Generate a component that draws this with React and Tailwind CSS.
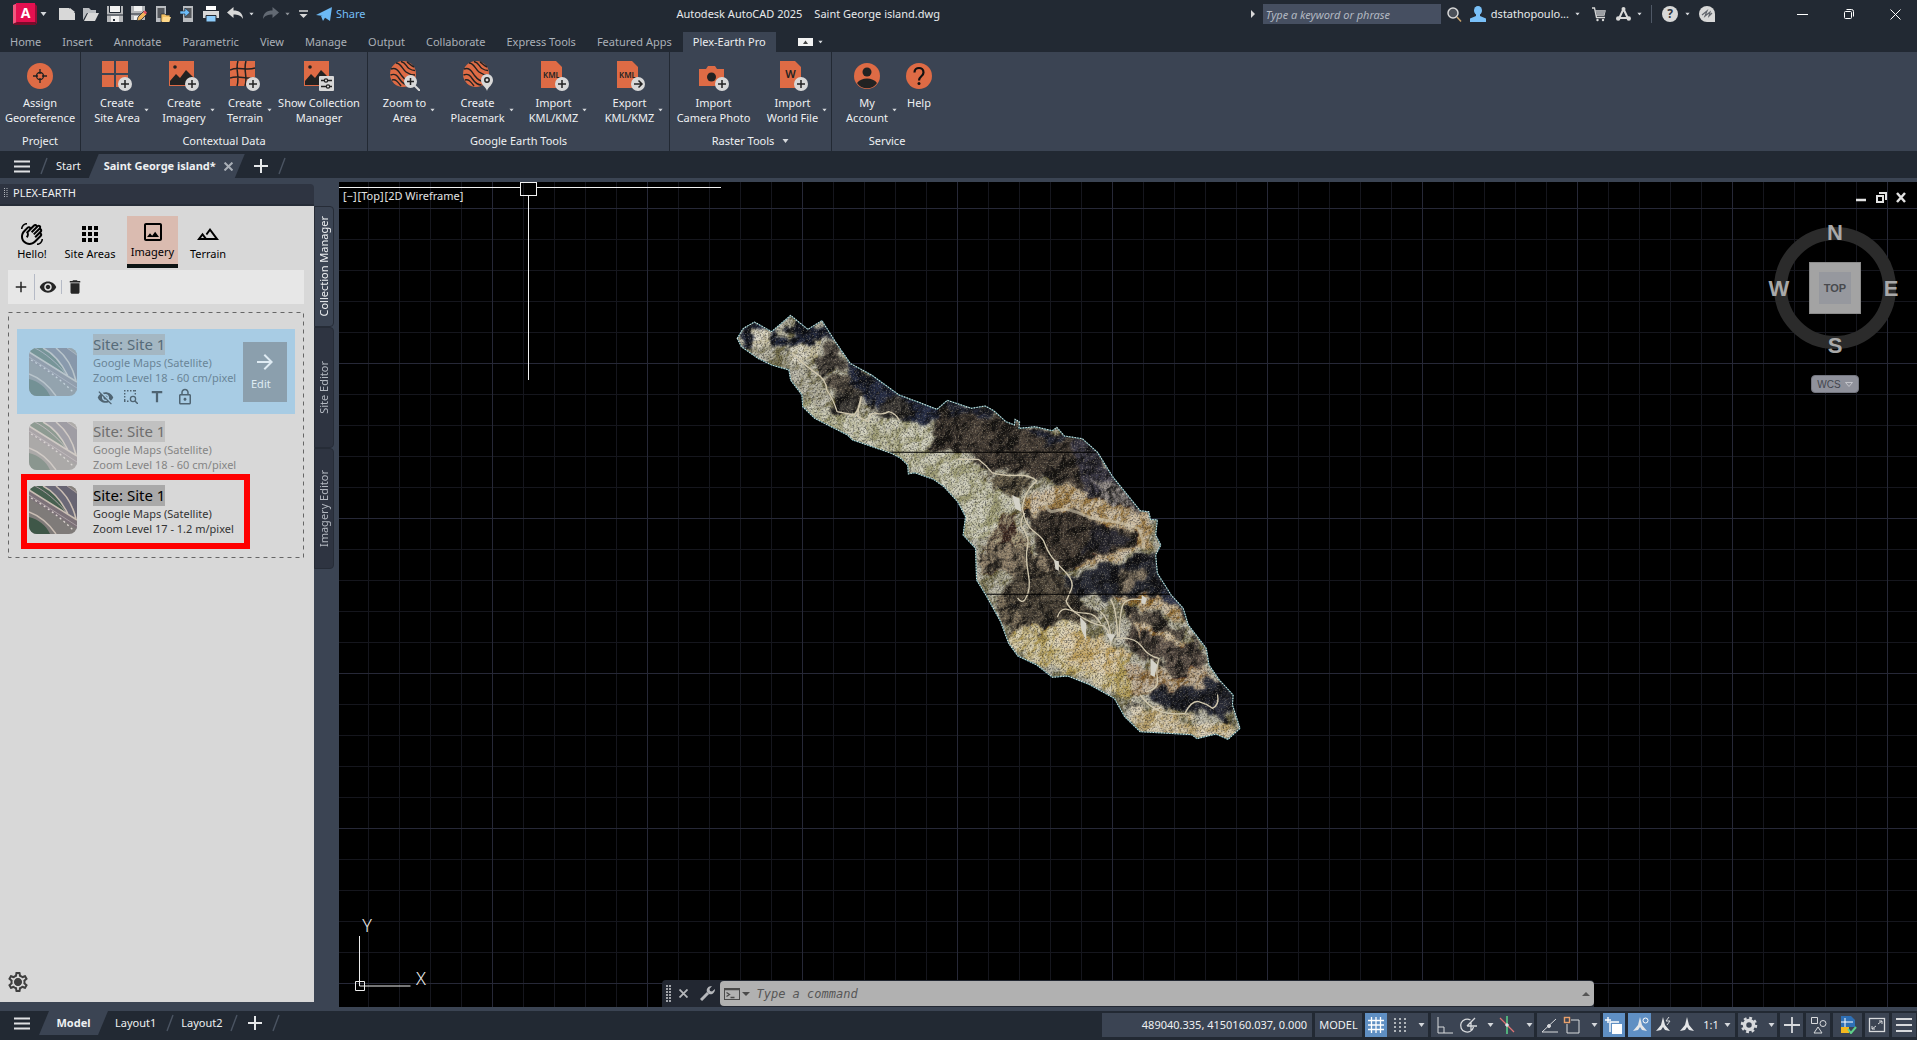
import { Fragment } from "react";
import {
  MdAdd,
  MdApps,
  MdArrowForward,
  MdDelete,
  MdOutlineImage,
  MdOutlineLandscape,
  MdOutlineLock,
  MdOutlineSettings,
  MdOutlineWavingHand,
  MdTitle,
  MdVisibility,
  MdVisibilityOff,
} from "react-icons/md";

const ORANGE = "#de6b45";
const LIGHT = "#d8d8d8";
const INK = "#222222";

const Caret = ({ className = "" }) => (
  <svg className={`shrink-0 ${className}`} width="7" height="4" viewBox="0 0 7 4" aria-hidden="true">
    <path d="M0.5 0h6L3.5 4z" fill="#d5d8dc" />
  </svg>
);

const Slash = () => (
  <svg className="shrink-0" width="8" height="18" viewBox="0 0 8 18" aria-hidden="true">
    <path d="M7 1L1 17" stroke="#4b5462" strokeWidth="1.4" />
  </svg>
);

const Burger = () => (
  <svg width="16" height="13" viewBox="0 0 16 13" aria-hidden="true">
    <path d="M0 1.5h16M0 6.5h16M0 11.5h16" stroke="#dfe1e4" strokeWidth="2" />
  </svg>
);

const PlusIcon = () => (
  <svg width="14" height="14" viewBox="0 0 14 14" aria-hidden="true">
    <path d="M7 0v14M0 7h14" stroke="#e6e8ea" strokeWidth="2" />
  </svg>
);

/* ---------- title bar ---------- */

const fileIcons = [
  {
    name: "New",
    art: <path d="M0 2h10l6 5v7H0zM11 2l5 4h-5z" fill={LIGHT} />,
  },
  {
    name: "Open",
    art: (
      <>
        <path d="M0 2h6l2 2h5v3H4L0 14z" fill="#b9bcc0" />
        <path d="M5 7h11l-4 8H1z" fill={LIGHT} />
      </>
    ),
  },
  {
    name: "Save",
    art: (
      <>
        <path d="M0 0h16v16H0z" fill="#b5b7ba" />
        <path d="M3 0h10v6H3zM4 10h8v6H4z" fill="#f1f1f1" />
        <path d="M2.5 0v6.5h11V0M0 9h16" stroke="#222933" fill="none" />
        <path d="M6 13h2v2H6z" fill="#222933" />
      </>
    ),
  },
  {
    name: "Save As",
    art: (
      <>
        <path d="M0 0h14v14H0z" fill="#b5b7ba" />
        <path d="M3 0h8v5H3zM3 10h6v4H3z" fill="#f1f1f1" />
        <path d="M0 8h14" stroke="#222933" />
        <path d="M6 15l1-4 6-6 3 3-6 6z" fill="#f0b45c" stroke="#222933" strokeWidth="0.8" />
        <path d="M12 6l2-1.5 2 2-1.5 2z" fill="#e25563" />
      </>
    ),
  },
  {
    name: "Open from Web & Mobile",
    art: (
      <>
        <path d="M1 0h10v16H1z" fill="#b9bcc0" />
        <path d="M2.5 2h7v10h-7z" fill="#55585d" />
        <path d="M6 8h4l1 1h4v7H6z" fill="#f2c063" stroke="#222933" strokeWidth="0.7" />
        <path d="M8 11h8l-2 5H7z" fill="#ffd98a" />
      </>
    ),
  },
  {
    name: "Save to Web & Mobile",
    art: (
      <>
        <path d="M4 0h10v16H4z" fill="#b9bcc0" />
        <path d="M5.5 2h7v10h-7z" fill="#55585d" />
        <path d="M1 5h5V2l5 4.5L6 11V8H1z" fill="#6cbcf8" stroke="#222933" strokeWidth="0.6" />
      </>
    ),
  },
  {
    name: "Plot",
    art: (
      <>
        <path d="M3 0h10v5H3z" fill="#fff" />
        <path d="M0 5h16v7H0z" fill={LIGHT} />
        <path d="M3 9.5h10V16H3z" fill="#8ccbfa" stroke="#222933" />
        <path d="M2 4.5h12" stroke="#222933" />
      </>
    ),
  },
];

const Undo = ({ flip, color }) => (
  <svg width="16" height="14" viewBox="0 0 16 14" className={flip ? "-scale-x-100" : ""} aria-hidden="true">
    <path d="M0 5.5L6.5 0v3.5C12 3.5 16 6 16 12c-2-3.5-5-4.5-9.5-4.5V11z" fill={color} />
  </svg>
);

const TitleBar = () => (
  <header className="flex h-8 items-start text-[#e8eaec]">
    <div className="flex h-7 items-center pl-3">
      <button aria-label="Application menu" className="flex items-center gap-[3px]">
        <svg width="25" height="22" viewBox="0 0 25 22" aria-hidden="true">
          <path d="M1 2l5-2v19l-5 2z" fill="#f0587f" />
          <path d="M1 21l4-2h18l1 3H3z" fill="#7b0b2b" />
          <path d="M4 0h19v19H4z" fill="#e51050" />
          <path d="M23 1l2 2v18l-2-2z" fill="#980e36" />
          <text x="13.5" y="14.5" textAnchor="middle" fontSize="14" fontWeight="700" fill="#fff" fontFamily="Noto Sans">
            A
          </text>
        </svg>
        <Caret />
      </button>
      <div className="flex items-center gap-2 pl-3">
        {fileIcons.map((icon) => (
          <button key={icon.name} aria-label={icon.name}>
            <svg width="16" height="16" viewBox="0 0 16 16" aria-hidden="true">
              {icon.art}
            </svg>
          </button>
        ))}
        <button aria-label="Undo" className="flex items-center gap-[5px]">
          <Undo color={LIGHT} />
          <Caret className="scale-75" />
        </button>
        <button aria-label="Redo" className="flex items-center gap-[5px]">
          <Undo flip color="#626973" />
          <Caret className="scale-75 opacity-60" />
        </button>
        <button aria-label="Customize">
          <svg width="9" height="8" viewBox="0 0 9 8" aria-hidden="true">
            <path d="M0 1h9" stroke={LIGHT} strokeWidth="1.5" />
            <path d="M0.5 4h8L4.5 8z" fill={LIGHT} />
          </svg>
        </button>
        <button className="flex items-center gap-1 text-[11px] text-[#74bff8]">
          <svg width="16" height="14" viewBox="0 0 16 14" aria-hidden="true">
            <path d="M0 8L16 0 7 9zM8 10l8-10-2 14zM5 9l10-8-8 13z" fill="#6cb9f5" />
          </svg>
          Share
        </button>
      </div>
    </div>
    <h1 className="flex h-7 flex-1 items-center justify-center gap-3 whitespace-pre text-[11px]">
      <span>Autodesk AutoCAD 2025</span>
      <span>Saint George island.dwg</span>
    </h1>
    <div className="flex h-7 items-center text-[11px]">
      <svg width="4" height="8" viewBox="0 0 4 8" aria-hidden="true">
        <path d="M0 0v8l4-4z" fill={LIGHT} />
      </svg>
      <input
        type="text"
        aria-label="Search"
        placeholder="Type a keyword or phrase"
        className="ml-2 h-5 w-[178px] bg-[#464f61] px-[3px] text-[11px] italic text-white outline-none placeholder:text-[#b3b9c2]"
      />
      <button aria-label="Find" className="ml-[6px]">
        <svg width="15" height="15" viewBox="0 0 15 15" fill="none" aria-hidden="true">
          <circle cx="6" cy="6" r="5" fill="#4b5058" stroke={LIGHT} strokeWidth="1.5" />
          <path d="M10 10l4 4.5" stroke="#c9a36c" strokeWidth="1.5" />
        </svg>
      </button>
      <button className="ml-2 flex items-center gap-[5px]">
        <svg width="16" height="16" viewBox="0 0 16 16" fill="#79c0f8" aria-hidden="true">
          <ellipse cx="8" cy="4.5" rx="4" ry="4.5" />
          <path d="M6 8h4v2l6 2.5V16H0v-3.5L6 10z" />
        </svg>
        dstathopoulo...
        <Caret className="scale-75" />
      </button>
      <button aria-label="App Store" className="ml-[11px]">
        <svg width="14" height="15" viewBox="0 0 14 15" fill="none" aria-hidden="true">
          <path d="M0 1h2.5l2 9.5H13M3.5 4H13l-1 4H4.5" stroke={LIGHT} strokeWidth="1.3" />
          <path d="M3.5 3.5h10L12 8H4.5z" fill="#9b9ea3" />
          <circle cx="5.5" cy="13" r="1.2" fill={LIGHT} />
          <circle cx="11" cy="13" r="1.2" fill={LIGHT} />
        </svg>
      </button>
      <button aria-label="Autodesk" className="ml-[10px] flex items-center gap-[5px]">
        <svg width="15" height="14" viewBox="0 0 15 14" aria-hidden="true">
          <path d="M7.5 2L3 11.5M7.5 2L12 11.5M3 11h9" stroke={LIGHT} strokeWidth="2" fill="none" />
          <circle cx="7.5" cy="2" r="2" fill={LIGHT} />
          <circle cx="2.2" cy="11.5" r="2.2" fill={LIGHT} />
          <circle cx="12.8" cy="11.5" r="2.2" fill={LIGHT} />
        </svg>
        <Caret className="scale-75" />
      </button>
      <span className="ml-2 h-[18px] w-px bg-[#4f5866]" />
      <button aria-label="Help" className="ml-[10px] flex items-center gap-[6px]">
        <span className="flex size-4 items-center justify-center rounded-full bg-[#d8d8d8] text-xs font-bold text-[#30353d]">?</span>
        <Caret className="scale-75" />
      </button>
      <button aria-label="Assistant" className="ml-2">
        <svg width="16" height="16" viewBox="0 0 16 16" aria-hidden="true">
          <path d="M8 0a8 8 0 0 1 8 8v8H8A8 8 0 0 1 8 0z" fill={LIGHT} />
          <path d="M3 9l5-4-2 5 5-4-1 4 3-3" stroke="#62666d" strokeWidth="1.2" fill="none" />
        </svg>
      </button>
      <div className="flex items-center gap-9 pl-[82px] pr-4">
        <button aria-label="Minimize">
          <svg width="11" height="11" viewBox="0 0 11 11" aria-hidden="true">
            <path d="M0 5.5h11" stroke="#fff" />
          </svg>
        </button>
        <button aria-label="Restore">
          <svg width="10" height="11" viewBox="0 0 10 11" fill="none" stroke="#fff" aria-hidden="true">
            <rect x="0.5" y="2.5" width="7" height="7" rx="1" />
            <path d="M2.5 0.5h5a2 2 0 0 1 2 2v5" />
          </svg>
        </button>
        <button aria-label="Close">
          <svg width="11" height="11" viewBox="0 0 11 11" stroke="#fff" aria-hidden="true">
            <path d="M0.5 0.5l10 10M10.5 0.5l-10 10" />
          </svg>
        </button>
      </div>
    </div>
  </header>
);

/* ---------- ribbon ---------- */

const menuTabs = [
  "Home",
  "Insert",
  "Annotate",
  "Parametric",
  "View",
  "Manage",
  "Output",
  "Collaborate",
  "Express Tools",
  "Featured Apps",
];

const MenuTabs = () => (
  <nav className="flex h-5 items-center gap-px text-[11px] text-[#aab0b8]">
    {menuTabs.map((tab) => (
      <a key={tab} href="#" className="px-[10px] leading-5">
        {tab}
      </a>
    ))}
    <a href="#" aria-current="page" className="bg-[#3b4453] px-[10px] leading-5 text-[#eceef0]">
      Plex-Earth Pro
    </a>
    <button aria-label="Ribbon display" className="ml-[21px] flex items-center gap-1">
      <svg width="15" height="8" viewBox="0 0 15 8" aria-hidden="true">
        <rect width="15" height="8" fill="#f2f2f2" />
        <path d="M5 6h5L7.5 2.5z" fill="#444" />
      </svg>
      <Caret className="scale-75" />
    </button>
  </nav>
);

const Badge = ({ arrow }) => (
  <>
    <circle cx="23" cy="23" r="7" fill={LIGHT} />
    {arrow ? (
      <path d="M19 23h7.5M23.5 19.5L27 23l-3.5 3.5" stroke={INK} strokeWidth="1.5" fill="none" />
    ) : (
      <path d="M23 19v8M19 23h8" stroke={INK} strokeWidth="1.5" />
    )}
  </>
);

const Globe = () => (
  <>
    <circle cx="13" cy="13" r="13" fill={ORANGE} />
    <path
      d="M6 2c5 0 6 6 10 9s6 3 9 3M11 0.5c5 1 5 5 8 7s4 2 6 2M1 8c6-2 8 3 11 7s7 6 11 5M0.5 14c5-2 7 1 9 4s5 6 9 6M2 19c4-1 6 2 9 6M17 1c2 1 3 3 7 5"
      stroke={INK}
      strokeWidth="1.4"
      fill="none"
    />
  </>
);

const Doc = ({ label }) => (
  <>
    <path d="M2 0h15l6 6v21H2z" fill={ORANGE} />
    <text x="12.5" y="17" textAnchor="middle" fontSize={label === "W" ? 11 : 8} fontWeight="600" fill={INK} fontFamily="Noto Sans">
      {label}
    </text>
  </>
);

const Photo = () => (
  <>
    <path d="M0 0h25v25H0z" fill={ORANGE} />
    <path d="M1 24v-4l6-7 4 4 6-8 8 8v7z" fill={INK} />
    <circle cx="6" cy="6" r="1.8" fill={INK} />
  </>
);

const ribbon = [
  {
    title: "Project",
    width: "w-[81px]",
    tools: [
      {
        lines: ["Assign", "Georeference"],
        width: "w-20",
        art: (
          <>
            <circle cx="15" cy="15" r="13" fill={ORANGE} />
            <circle cx="15" cy="15" r="3.5" fill="none" stroke={INK} strokeWidth="1.3" />
            <path d="M15 8v5M15 17v5M8 15h5M17 15h5" stroke={INK} strokeWidth="1.3" />
          </>
        ),
      },
    ],
  },
  {
    title: "Contextual Data",
    width: "w-[287px]",
    tools: [
      {
        lines: ["Create", "Site Area"],
        width: "w-[68px]",
        caret: true,
        art: (
          <>
            <path d="M0 0h12v12H0zM14 0h12v12H14zM0 14h12v12H0zM14 14h12v12H14z" fill={ORANGE} />
            <Badge />
          </>
        ),
      },
      {
        lines: ["Create", "Imagery"],
        width: "w-[66px]",
        caret: true,
        art: (
          <>
            <Photo />
            <Badge />
          </>
        ),
      },
      {
        lines: ["Create", "Terrain"],
        width: "w-[56px]",
        caret: true,
        art: (
          <>
            <path d="M0 0h25v25H0z" fill={ORANGE} />
            <path d="M8 0c-3 8 2 16-1 25M16 0c-3 9 2 16-1 25M0 9c8-4 16 1 25-2M0 17c8-3 14 1 25 0" stroke={INK} strokeWidth="1.5" fill="none" />
            <Badge />
          </>
        ),
      },
      {
        lines: ["Show Collection", "Manager"],
        width: "w-[92px]",
        art: (
          <>
            <Photo />
            <rect x="15" y="15" width="15" height="15" rx="1" fill={LIGHT} />
            <path d="M17 19.5h3M24 19.5h4M17 25.5h5M26 25.5h2" stroke={INK} strokeWidth="1.3" />
            <circle cx="22" cy="19.5" r="1.7" fill="none" stroke={INK} strokeWidth="1.2" />
            <circle cx="24" cy="25.5" r="1.7" fill="none" stroke={INK} strokeWidth="1.2" />
          </>
        ),
      },
    ],
  },
  {
    title: "Google Earth Tools",
    width: "w-[302px]",
    tools: [
      {
        lines: ["Zoom to", "Area"],
        width: "w-[70px]",
        caret: true,
        art: (
          <>
            <Globe />
            <path d="M24 24l6 6" stroke={LIGHT} strokeWidth="2" />
            <circle cx="20.5" cy="20.5" r="6.5" fill={LIGHT} />
            <path d="M20.5 17v7M17 20.5h7" stroke={INK} strokeWidth="1.5" />
          </>
        ),
      },
      {
        lines: ["Create", "Placemark"],
        width: "w-[76px]",
        caret: true,
        art: (
          <>
            <Globe />
            <path d="M24 30c-1-4-6-6-6-11a6 6 0 0 1 12 0c0 5-5 7-6 11z" fill={LIGHT} />
            <circle cx="24" cy="19" r="2.2" fill="none" stroke={INK} strokeWidth="1.5" />
          </>
        ),
      },
      {
        lines: ["Import", "KML/KMZ"],
        width: "w-[76px]",
        caret: true,
        art: (
          <>
            <Doc label="KML" />
            <Badge />
          </>
        ),
      },
      {
        lines: ["Export", "KML/KMZ"],
        width: "w-[76px]",
        caret: true,
        art: (
          <>
            <Doc label="KML" />
            <Badge arrow />
          </>
        ),
      },
    ],
  },
  {
    title: "Raster Tools",
    width: "w-[162px]",
    titleCaret: true,
    tools: [
      {
        lines: ["Import", "Camera Photo"],
        width: "w-[84px]",
        art: (
          <>
            <path d="M0 8h7l2-3h7l2 3h7v17H0z" fill={ORANGE} />
            <circle cx="12.5" cy="16" r="4.5" fill={INK} />
            <Badge />
          </>
        ),
      },
      {
        lines: ["Import", "World File"],
        width: "w-[74px]",
        caret: true,
        art: (
          <>
            <Doc label="W" />
            <Badge />
          </>
        ),
      },
    ],
  },
  {
    title: "Service",
    width: "w-[110px]",
    last: true,
    tools: [
      {
        lines: ["My", "Account"],
        width: "w-[64px]",
        caret: true,
        art: (
          <>
            <circle cx="15" cy="15" r="13" fill={ORANGE} />
            <circle cx="15" cy="11" r="4.5" fill={INK} />
            <path d="M5 22c4-6 16-6 20 0-4 7-16 7-20 0z" fill={INK} />
          </>
        ),
      },
      {
        lines: ["Help"],
        width: "w-[40px]",
        art: (
          <>
            <circle cx="15" cy="15" r="13" fill={ORANGE} />
            <path d="M10.5 11.5c0-6 9-6 9 0 0 4-4.5 3.5-4.5 8" stroke="#111" strokeWidth="2.2" fill="none" />
            <circle cx="15" cy="22.5" r="1.5" fill="#111" />
          </>
        ),
      },
    ],
  },
];

const Ribbon = () => (
  <section aria-label="Plex-Earth Pro" className="flex bg-[#3b4453] text-[11px] leading-[15px] text-[#eef0f2]">
    {ribbon.map((panel) => (
      <div key={panel.title} className={`${panel.width} shrink-0 ${panel.last ? "" : "border-r border-[#222933]"} pb-[2px] pt-[9px]`}>
        <div className="flex h-[72px] justify-center">
          {panel.tools.map((tool) => (
            <button key={tool.lines.join(" ")} className={`${tool.width} flex shrink-0 flex-col items-center gap-[4px]`}>
              <svg className="shrink-0" width="30" height="30" viewBox="0 0 30 30" aria-hidden="true">
                {tool.art}
              </svg>
              <span className="flex items-center whitespace-nowrap">
                <span>
                  {tool.lines.map((line, i) => (
                    <Fragment key={line}>
                      {i > 0 && <br />}
                      {line}
                    </Fragment>
                  ))}
                </span>
                {tool.caret && <Caret className="-mr-[10px] ml-[3px] scale-75" />}
              </span>
            </button>
          ))}
        </div>
        <div className="flex items-center justify-center gap-2 leading-4">
          {panel.title}
          {panel.titleCaret && <Caret />}
        </div>
      </div>
    ))}
  </section>
);

const DocTabs = () => (
  <div className="flex h-[27px] items-center pt-[3px] text-[11px] text-[#eef0f2]">
    <button aria-label="File tab menu" className="pl-[14px] pr-[10px]">
      <Burger />
    </button>
    <Slash />
    <a href="#" className="px-2">
      Start
    </a>
    <div className="flex h-6 items-center gap-2 bg-[#3b4453] pl-[15px] pr-3 font-bold [clip-path:polygon(10px_0,100%_0,calc(100%-10px)_100%,0_100%)]">
      Saint George island*
      <button aria-label="Close tab">
        <svg width="9" height="9" viewBox="0 0 8 8" stroke="#a9afb7" strokeWidth="1.8" aria-hidden="true">
          <path d="M0.5 0.5l7 7M7.5 0.5l-7 7" />
        </svg>
      </button>
    </div>
    <button aria-label="New drawing" className="pl-[9px] pr-[10px]">
      <PlusIcon />
    </button>
    <Slash />
  </div>
);

/* ---------- palette ---------- */

const Thumb = ({ className = "" }) => (
  <svg className={`shrink-0 rounded-lg ${className}`} width="48" height="48" viewBox="0 0 48 48" aria-hidden="true">
    <rect width="48" height="48" fill="#7f7b79" />
    <path d="M2 0h12c10 5 18 14 24 27L0 4V0z" fill="#46604f" />
    <path d="M14 0h15c9 9 15 20 18 32l-8-4C34 16 25 6 14 0z" fill="#6b6977" />
    <path d="M27 0h11l10 7v26C44 18 38 8 27 0z" fill="#676472" />
    <path d="M38 0h10v8z" fill="#85817c" />
    <path d="M0 5l48 30v8L0 12z" fill="#7c7178" />
    <path d="M0 31c9 2 17 8 21 17H0z" fill="#3f5748" />
    <path d="M0 4l48 30M14 0c10 5 18 14 25 28M27 0c10 8 17 20 20 33M0 26c11 4 20 12 27 22" stroke="#c9bdb3" strokeWidth="1.5" fill="none" />
    <path d="M0 9l48 31M6 0c10 5 22 15 31 26M38 0l10 7" stroke="#a79ca0" strokeWidth="1" fill="none" />
    <path d="M2 12c14 8 28 18 42 32" stroke="#ded6d2" strokeWidth="1.3" strokeDasharray="2 3" fill="none" />
  </svg>
);

const SelectZoom = () => (
  <svg width="14" height="14" viewBox="0 0 14 14" fill="none" stroke="currentColor" aria-hidden="true">
    <path d="M0.7 0v12M0 0.7h12M11.3 0v5M0 11.3h6" strokeWidth="1.4" strokeDasharray="1.5 1.5" />
    <circle cx="9" cy="9" r="2.6" strokeWidth="1.3" />
    <path d="M11 11l3 3" strokeWidth="1.5" />
  </svg>
);

const PaletteTabs = () => {
  const tabs = [
    { name: "Hello!", Icon: MdOutlineWavingHand, width: "w-[42px]" },
    { name: "Site Areas", Icon: MdApps, width: "w-[74px]" },
    { name: "Imagery", Icon: MdOutlineImage, width: "w-[51px]", active: true },
    { name: "Terrain", Icon: MdOutlineLandscape, width: "w-[60px]" },
  ];
  return (
    <div role="tablist" className="flex pl-[11px] pt-[10px] text-[11px] leading-4 text-black">
      {tabs.map(({ name, Icon, width, active }) => (
        <button
          key={name}
          role="tab"
          aria-selected={Boolean(active)}
          className={`${width} flex h-[52px] flex-col items-center whitespace-nowrap border-b-4 ${
            active ? "border-[#0d1414] bg-[#dabbb0] pt-1" : "border-transparent pt-[6px]"
          }`}
        >
          <Icon size={24} className="shrink-0" />
          <span>{name}</span>
        </button>
      ))}
    </div>
  );
};

const layers = [
  { zoom: "Zoom Level 18 - 60 cm/pixel", selected: true, faded: true },
  { zoom: "Zoom Level 18 - 60 cm/pixel", faded: true },
  { zoom: "Zoom Level 17 - 1.2 m/pixel", marked: true },
];

const LayerCard = ({ layer }) => (
  <li
    className={`relative flex items-center pl-3 pr-2 ${
      layer.selected ? "h-[85px] bg-[#a8cce4] text-[#6a8597]" : "h-16"
    } ${layer.faded && !layer.selected ? "text-[#858585]" : ""} ${layer.faded ? "" : "text-[#333]"}`}
  >
    <Thumb className={layer.faded ? "opacity-50" : ""} />
    <div className="flex-1 whitespace-nowrap pl-4 text-[11px] leading-[15px]">
      <div
        className={`w-fit text-[15px] leading-[21px] ${
          layer.selected ? "bg-[#a4b7c3] text-[#566b79]" : layer.faded ? "bg-[#c1c1c1] text-[#6e6e6e]" : "bg-[#a9a9a9] text-black"
        }`}
      >
        Site: Site 1
      </div>
      <div>Google Maps (Satellite)</div>
      <div>{layer.zoom}</div>
      {layer.selected && (
        <div className="flex h-[25px] items-center gap-[10px] pl-1 text-[#4f6472]">
          <button aria-label="Hide">
            <MdVisibilityOff size={17} />
          </button>
          <button aria-label="Zoom to selection">
            <SelectZoom />
          </button>
          <button aria-label="Rename">
            <MdTitle size={18} />
          </button>
          <button aria-label="Lock">
            <MdOutlineLock size={18} />
          </button>
        </div>
      )}
    </div>
    {layer.selected && (
      <button className="flex h-[60px] w-11 flex-col justify-center bg-[#8b9fad] pl-2 text-left text-[11px] leading-5 text-[#dfebf3]">
        <MdArrowForward size={24} className="ml-[2px]" />
        Edit
      </button>
    )}
    {layer.marked && <span className="absolute -top-1 left-1 h-[75px] w-[229px] border-[6px] border-[#ff0000]" />}
  </li>
);

const Palette = () => (
  <aside className="flex w-[314px] shrink-0 flex-col pb-[9px] pt-[6px]">
    <h2 className="flex h-[22px] items-center gap-[5px] rounded-tr border-b-2 border-[#262c37] bg-[#2e3441] pb-[2px] pl-1 text-[11px] text-[#eef0f2]">
      <svg width="4" height="10" viewBox="0 0 4 10" aria-hidden="true">
        <path d="M0.5 0v10M3 0v10" stroke="#b7bbc1" strokeDasharray="1 1" />
      </svg>
      PLEX-EARTH
    </h2>
    <div className="flex flex-1 flex-col bg-[#d8d8d8]">
      <PaletteTabs />
      <div className="mx-2 mr-[10px] mt-[2px] flex h-[34px] items-center bg-[#e7e7e7] pl-1 text-[#262626]">
        <button aria-label="Add">
          <MdAdd size={18} />
        </button>
        <span className="ml-1 h-[26px] w-px bg-[#b5bac6]" />
        <button aria-label="Toggle visibility" className="ml-1">
          <MdVisibility size={18} />
        </button>
        <span className="ml-1 h-[14px] w-px bg-[#b5bac6]" />
        <button aria-label="Delete" className="ml-1">
          <MdDelete size={18} />
        </button>
      </div>
      <div className="relative ml-2 mr-[10px] mt-2 px-[9px] pb-4 pt-[17px]">
        <svg className="absolute inset-0 size-full" fill="none" stroke="#666" aria-hidden="true">
          <rect x="0.5" y="0.5" width="295" height="245" strokeDasharray="4 4" />
        </svg>
        <ul className="relative">
          {layers.map((layer, index) => (
            <LayerCard key={index} layer={layer} />
          ))}
        </ul>
      </div>
      <button aria-label="Settings" className="mb-[8px] ml-[6px] mt-auto w-fit text-[#3f3f3f]">
        <svg width="24" height="24" viewBox="0 0 24 24" aria-hidden="true">
          <MdOutlineSettings size={24} />
          <circle cx="12" cy="12" r="3.5" fill="currentColor" />
        </svg>
      </button>
    </div>
  </aside>
);

const SideTabs = () => (
  <div role="tablist" aria-label="Palette pages" className="mr-[5px] flex w-5 shrink-0 flex-col pt-7 text-[11px]">
    {["Collection Manager", "Site Editor", "Imagery Editor"].map((name, index) => (
      <button
        key={name}
        role="tab"
        aria-selected={index === 0}
        className={`flex h-[121px] items-center justify-center rounded-r border border-[#262c37] ${
          index === 0 ? "bg-[#3b4453] text-[#eef0f2]" : "bg-[#2e3441] text-[#b3b8c0]"
        }`}
      >
        <span className="rotate-180 whitespace-nowrap [writing-mode:vertical-rl]">{name}</span>
      </button>
    ))}
  </div>
);

/* ---------- drawing area ---------- */

const coast =
  "M50 115L68 85 100 66 150 95 205 46 255 88 296 62 310 85 335 125 378 190 440 225 520 285 575 306 630 328 660 301 730 325 770 318 795 332 830 365 855 375 857 358 870 366 868 385 915 380 965 392 978 382 1000 408 1052 416 1097 458 1140 530 1220 632 1245 635 1250 658 1270 660 1265 705 1280 735 1265 765 1270 820 1310 885 1345 925 1360 975 1412 1045 1420 1095 1450 1140 1490 1185 1488 1215 1510 1285 1475 1318 1440 1302 1385 1316 1370 1304 1270 1298 1220 1295 1175 1250 1145 1195 1075 1155 1010 1128 965 1132 920 1095 865 1068 838 1030 815 965 772 885 745 840 742 745 706 705 713 650 690 605 650 560 620 538 565 518 547 522 545 495 525 475 498 460 400 425 385 420 370 405 275 355 240 320 238 285 205 240 200 210 150 195 110 175 62 140z";

const Island = () => (
  <svg
    className="absolute left-[381px] top-[118px] h-[450px] w-[540px]"
    viewBox="0 0 1568 1350"
    preserveAspectRatio="none"
    role="img"
    aria-label="Satellite imagery of the island"
  >
    <defs>
      <clipPath id="coast">
        <path d={coast} />
      </clipPath>
      <filter id="rough" x="0" y="0" width="100%" height="100%" colorInterpolationFilters="sRGB">
        <feTurbulence type="fractalNoise" baseFrequency="0.02" numOctaves="5" seed="4" result="n" />
        <feDisplacementMap in="SourceGraphic" in2="n" scale="70" xChannelSelector="R" yChannelSelector="G" result="d" />
        <feGaussianBlur in="d" stdDeviation="3" />
      </filter>
      <filter id="relief" x="0" y="0" width="100%" height="100%" colorInterpolationFilters="sRGB">
        <feTurbulence type="fractalNoise" baseFrequency="0.012 0.016" numOctaves="5" seed="12" />
        <feColorMatrix values="0 0 0 0 0  0 0 0 0 0  0 0 0 0 0  1 0 0 0 0" />
        <feDiffuseLighting surfaceScale="40" diffuseConstant="0.72" lightingColor="#fff">
          <feDistantLight azimuth="200" elevation="42" />
        </feDiffuseLighting>
      </filter>
      <filter id="grain" x="0" y="0" width="100%" height="100%" colorInterpolationFilters="sRGB">
        <feTurbulence type="fractalNoise" baseFrequency="0.2" numOctaves="3" seed="9" />
        <feColorMatrix values="0 0 0 0 0.1  0 0 0 0 0.1  0 0 0 0 0.12  3 0 0 0 -1.3" />
      </filter>
      <filter id="speck" x="0" y="0" width="100%" height="100%" colorInterpolationFilters="sRGB">
        <feTurbulence type="fractalNoise" baseFrequency="0.22" numOctaves="3" seed="21" />
        <feColorMatrix values="0 0 0 0 0.86  0 0 0 0 0.82  0 0 0 0 0.7  0 4 0 0 -2.1" />
      </filter>
    </defs>
    <g clipPath="url(#coast)" className="isolate">
      <g filter="url(#rough)">
        <path d="M0 0h1568v1350H0z" fill="#a9a692" />
        <path d="M240 300L400 340 610 370 600 450 760 500 860 600 780 720 700 720 640 560 380 430 240 350z" fill="#c3c2aa" />
        <path d="M60 70L160 60 190 140 60 130zM215 40l70 40 30-20 25 60-90 10-60 20z" fill="#1d2335" />
        <path d="M90 85l60 10 0 40-50 10zM210 140l100-30-40 60-50 10z" fill="#d0cbb5" />
        <path d="M260 180l70-50 50 70-70 20z" fill="#47413a" />
        <path d="M310 240l80-30 60 40-40 60-70 30z" fill="#4b443b" />
        <path d="M380 180l160 100 110 50-20 40-120 0-60-60-90-60z" fill="#20263a" />
        <path d="M340 290l70-10-30 60-50-10zM440 330l60-40 80 50-70 20z" fill="#3a3733" />
        <path d="M600 450L640 330 670 295 870 370 1060 410 1150 530 1110 600 1010 550 920 540 860 520 780 510 700 460z" fill="#3f372f" />
        <path d="M1020 420l50 0 160 210-20 40-110-50-60-90z" fill="#34323d" />
        <path d="M1080 540l60 0 90 110-80-20z" fill="#7d7775" />
        <path d="M620 320l40-30 140 40-40 30zM880 380l140 30-60 30z" fill="#222532" />
        <path d="M770 520l150 20-60 50-40-10z" fill="#5a513f" />
        <path d="M870 600L1000 550 1110 590 1240 660 1270 740 1120 780 1040 810 940 700z" fill="#c0ac8b" />
        <path d="M890 640l60-10 100 10 20 20 140 40 0 30-90 30-120 60-60-20-30-80z" fill="#3b332b" />
        <path d="M1080 670l130 40-80 40-80 20z" fill="#27262d" />
        <path d="M1040 830l60-40 60 0 100-30 10 60 50 80-180-10-130 0-40-30z" fill="#22242c" />
        <path d="M1170 800l60 10-40 70-40 0z" fill="#6d6252" />
        <path d="M780 690l80-60 30 100-20 60-110-10z" fill="#8b7d65" />
        <path d="M760 740l130 0 90 70-10 70-130-60-90 10z" fill="#786b58" />
        <path d="M850 830l130-10 70 90 60 40-40 10-70 0-50 50-110-10-40-100z" fill="#4a4236" />
        <path d="M800 880l60 30 40 90-60 10z" fill="#675c4a" />
        <path d="M840 1000l140-20 60-30 40 90 130 60-10 90-100-30-130-50-120-50z" fill="#cfc298" />
        <path d="M980 990l120 20 80 50-40 80-130-50z" fill="#d6c39a" />
        <path d="M1170 920l60 10 120 60-20 30-150-40z" fill="#4c443b" />
        <path d="M1180 980l60 0 150 50 20 60-50 40-150-60-40-50z" fill="#564b42" />
        <path d="M1130 890l200 0 30 80-150-50z" fill="#b8a27e" />
        <path d="M1190 955l160 60 10 20-60-15-110-40z" fill="#c0aa86" />
        <path d="M1260 870l60 0 40 90-60-40z" fill="#2a2e3f" />
        <path d="M1180 1090l180 30 60-30 60 90-200 0-80 0z" fill="#b29d80" />
        <path d="M1240 1175l160-20 30-30 60 60-10 80-60-20-150-10z" fill="#23252f" />
        <path d="M1170 1200l50 10 60 30 200 30 30 50-300-10z" fill="#d2c4a4" />
        <path d="M1160 1215l70-5-20 25zM830 915l60 20-50-5z" fill="#34322f" />
      </g>
      <path d="M0 0h1568v1350H0z" filter="url(#relief)" className="mix-blend-overlay" opacity="0.7" />
      <path d="M0 0h1568v1350H0z" filter="url(#grain)" opacity="0.5" />
      <path d="M0 0h1568v1350H0z" filter="url(#speck)" opacity="0.3" />
      <g fill="none" stroke="#d0c7ae" strokeWidth="4" strokeLinejoin="round" strokeLinecap="round">
        <path d="M210 160q40 40 70 60t30 50q20 30 30 65l50 10q20-30 20-55-10 30-10 60l30 15q5-30 25-25t35-5q20 5 30 25" />
        <path d="M690 478h60q20 15 40 40 30 10 70 8t60 17q-25 20-35 50t-5 40q5 40 30 60t30 30q10 30 25 50t35 40q30 30 20 55t-15 35q5 20 40 45t70 30q20 20 20 60" />
        <path d="M1155 1015q50-5 70 25t50 35q-10 30-5 60t-30 40M885 640q-15 20-10 40 25 30 18 60t2 80q10 50-10 80-10 10-20-5M980 950q10-30 35-20t50 10 40 30M1105 935q25 20 30 75M1135 900q15 20 20 110M1230 900q-50-10-60 15t-10 95M1220 1185q30 40 60 50t70 5q20-40 40-35t40 20q20-10 15-40" />
        <path d="M945 610q5 25 20 25 30-10 50-5t40 15 60 15 100 25q15 30 15 60" strokeWidth="9" opacity="0.6" />
      </g>
      <g fill="#d4d2c8">
        <path d="M848 585l20 10 8 40-18-8zM970 780l14 4 0 28-10-4zM1045 950l18 20 0 50-14-30zM1225 885l14 10-4 18-12-4zM1120 1000l28 4-12 22zM1250 1075l20 20-8 36-12-6z" />
      </g>
      <path d="M0 457h1568M0 883h1568" stroke="#000" strokeWidth="3" />
    </g>
    <path d={coast} fill="none" stroke="#3b7078" strokeWidth="3" />
    <path d={coast} fill="none" stroke="#dfe8e4" strokeWidth="3" strokeDasharray="4 4" />
  </svg>
);

const ViewCube = () => (
  <div className="absolute right-[12px] top-[30px] flex w-[140px] flex-col items-center gap-[13px] font-[Liberation_Sans]">
    <svg width="140" height="150" viewBox="0 -10 140 150" role="img" aria-label="View cube">
      <circle cx="70" cy="66" r="54.5" fill="none" stroke="#2b2b2b" strokeWidth="13" />
      <rect x="44.5" y="40.5" width="51" height="51" fill="#a3a3a3" stroke="#8b8b8b" />
      <rect x="54" y="50" width="32" height="32" fill="#96989e" />
      <g fill="#a9a9a9" fontSize="22" fontWeight="700" textAnchor="middle">
        <text x="70" y="18">N</text>
        <text x="126" y="74">E</text>
        <text x="70" y="131">S</text>
        <text x="14" y="74">W</text>
      </g>
      <text x="70" y="70" textAnchor="middle" fontSize="11" fontWeight="700" fill="#484a4e">
        TOP
      </text>
    </svg>
    <button className="flex h-[18px] w-12 items-center justify-center gap-1 rounded border border-[#73757f] bg-[#8f919b] text-[10px] text-[#42454d]">
      WCS
      <svg width="8" height="5" viewBox="0 0 8 5" aria-hidden="true">
        <path d="M0.5 0.5h7L4 4.5z" fill="none" stroke="#c3c4ca" />
      </svg>
    </button>
  </div>
);

const Canvas = () => (
  <main className="relative mb-1 mt-1 flex flex-1 flex-col overflow-hidden bg-black">
    <svg className="absolute inset-0 size-full" aria-hidden="true">
      <defs>
        <pattern id="minor" x="29" y="26" width="31" height="31" patternUnits="userSpaceOnUse">
          <path d="M0 0.5h31M0.5 0v31" stroke="#15161d" />
        </pattern>
        <pattern id="major" x="153" y="26" width="155" height="155" patternUnits="userSpaceOnUse">
          <path d="M0 0.5h155M0.5 0v155" stroke="#262837" />
        </pattern>
      </defs>
      <rect width="100%" height="100%" fill="url(#minor)" />
      <rect width="100%" height="100%" fill="url(#major)" />
    </svg>
    <Island />
    <svg className="absolute left-0 top-0" width="390" height="200" fill="none" stroke="#f2f2f2" aria-hidden="true">
      <path d="M0 5.5h181M198 5.5h184M189.5 14v184" />
      <rect x="181.5" y="0.5" width="16" height="13" />
    </svg>
    <div className="relative flex items-start justify-between pl-1 pr-[10px] pt-[6px] text-[11px] leading-4 text-[#e4e4e4]">
      <div className="flex gap-px">
        <button>[−]</button>
        <button>[Top]</button>
        <button>[2D Wireframe]</button>
      </div>
      <svg className="mt-1" width="52" height="11" viewBox="0 0 52 11" fill="none" stroke="#e2e2e2" strokeWidth="2" aria-hidden="true">
        <path d="M1 8h10M42 1l8 9M50 1l-8 9" strokeWidth="2.5" />
        <path d="M22 4h6v6h-6zM24 1h7v7" />
      </svg>
    </div>
    <ViewCube />
    <svg className="absolute bottom-2 left-4" width="76" height="88" fill="none" stroke="#ededed" aria-hidden="true">
      <path d="M4.5 25v50h51M0.5 70.5h9v9h-9z" />
      <g fill="#ededed" stroke="none" fontSize="18" fontWeight="300" textAnchor="middle" fontFamily="Noto Sans">
        <text x="12" y="21">Y</text>
        <text x="66" y="74">X</text>
      </g>
    </svg>
    <div className="relative mx-auto mt-auto flex h-[27px] w-[59%] items-stretch rounded-t bg-[#222731]">
      <div className="flex w-[58px] items-center gap-3 pl-1">
        <svg width="5" height="17" viewBox="0 0 5 17" aria-hidden="true">
          <path d="M1 0v17M4 0v17" stroke="#a3a6ab" strokeWidth="2" strokeDasharray="2 1" />
        </svg>
        <button aria-label="Close command line" className="-ml-1">
          <svg width="9" height="9" viewBox="0 0 9 9" stroke="#b5b7bb" strokeWidth="1.8" aria-hidden="true">
            <path d="M0.5 0.5l8 8M8.5 0.5l-8 8" />
          </svg>
        </button>
        <button aria-label="Customize command line">
          <svg width="15" height="15" viewBox="0 0 15 15" aria-hidden="true">
            <path d="M1 14L8 7" stroke="#b5b7bb" strokeWidth="3" />
            <path d="M12 0L9.5 3l.5 2 2 .5L15 3c0 4-3 6-6 5L7 6c-1-3 1-6 5-6z" fill="#b5b7bb" />
          </svg>
        </button>
      </div>
      <div className="mb-px mt-px flex flex-1 items-center gap-[2px] rounded-sm bg-[#b1b1b1] px-1">
        <svg width="16" height="12" viewBox="0 0 16 12" fill="none" stroke="#4a4a4a" aria-hidden="true">
          <rect x="0.5" y="0.5" width="15" height="11" />
          <path d="M0 1.5h16M2.5 4.5l3 2-3 2M6.5 9.5h4" strokeWidth="1.3" />
        </svg>
        <svg width="8" height="4" viewBox="0 0 8 4" aria-hidden="true">
          <path d="M0 0h8L4 4z" fill="#4a4a4a" />
        </svg>
        <input
          type="text"
          aria-label="Command line"
          placeholder="Type a command"
          className="h-full min-w-0 flex-1 bg-transparent pl-1 font-['DejaVu_Sans_Mono',monospace] text-xs italic outline-none placeholder:text-[#565656]"
        />
        <svg width="8" height="4" viewBox="0 0 8 4" aria-hidden="true">
          <path d="M0 4h8L4 0z" fill="#555" />
        </svg>
      </div>
    </div>
  </main>
);

/* ---------- status bar ---------- */

const Cell = ({ label, width, on, caret, children }) => (
  <button
    aria-label={label}
    className={`${width} flex h-6 shrink-0 items-center justify-center gap-[10px] ${on ? "bg-[#5f8fc3]" : ""}`}
  >
    <svg width="18" height="18" viewBox="0 0 18 18" fill="none" stroke="#d8dadd" aria-hidden="true">
      {children}
    </svg>
    {caret && <Caret />}
  </button>
);

const Group = ({ children }) => <div className="flex shrink-0 bg-[#3b4453]">{children}</div>;

const Person = () => <path d="M9 1l2 8 5 6-5-1-2-3-2 3-5 1 5-6z" fill="#e4e6e8" stroke="none" />;

const StatusBar = () => (
  <footer className="flex h-[29px] items-start text-[11px] text-[#eef0f2]">
    <button aria-label="Layout menu" className="flex h-6 items-center pl-[14px] pr-[9px]">
      <Burger />
    </button>
    <a
      href="#"
      className="flex h-6 w-[69px] items-center justify-center bg-[#3b4453] font-bold [clip-path:polygon(10px_0,100%_0,calc(100%-10px)_100%,0_100%)]"
    >
      Model
    </a>
    <div className="flex h-6 items-center">
      <a href="#" className="pl-[7px] pr-[10px]">
        Layout1
      </a>
      <Slash />
      <a href="#" className="px-[7px]">
        Layout2
      </a>
      <Slash />
      <button aria-label="New layout" className="px-[10px]">
        <PlusIcon />
      </button>
      <Slash />
    </div>
    <div className="ml-auto mt-[2px] flex h-6 shrink-0 gap-[3px] pr-px">
      <div className="flex w-[210px] items-center justify-end bg-[#3b4453] pr-[5px]">489040.335, 4150160.037, 0.000</div>
      <button className="w-[47px] bg-[#3b4453]">MODEL</button>
      <Group>
        <Cell label="Grid" width="w-[22px]" on>
          <path d="M4.5 1v16M9 1v16M13.5 1v16M1 4.5h16M1 9h16M1 13.5h16" stroke="#fff" strokeWidth="1.3" />
        </Cell>
        <Cell label="Snap" width="w-[41px]" caret>
          <path d="M4 3h12M4 7h12M4 11h12M4 15h12" strokeWidth="1.7" strokeDasharray="2 3" />
        </Cell>
      </Group>
      <Group>
        <Cell label="Ortho" width="w-[25px]">
          <path d="M3 1v16h15M3 11h6v6" />
        </Cell>
        <Cell label="Polar tracking" width="w-[40px]" caret>
          <path d="M11.5 4a6.5 6.5 0 1 0 3 7M8 10h10M8 10l8-8M12 6v8" strokeWidth="1.3" />
        </Cell>
        <Cell label="Isometric drafting" width="w-[38px]" caret>
          <path d="M2 2l14 14" stroke="#e07474" strokeWidth="1.3" />
          <path d="M9 0v18" stroke="#5bd58a" strokeWidth="1.5" />
          <circle cx="9" cy="9" r="1.3" fill="#eef0f2" />
        </Cell>
      </Group>
      <Group>
        <Cell label="Object snap tracking" width="w-[24px]">
          <path d="M16 3L2 16h16" />
          <circle cx="9" cy="10" r="1.5" fill="#d8dadd" />
        </Cell>
        <Cell label="Object snap" width="w-[39px]" caret>
          <path d="M8 4h8v13H4V8" />
          <rect x="1.5" y="1.5" width="5" height="5" stroke="#eaa06a" strokeWidth="1.4" />
        </Cell>
      </Group>
      <Group>
        <Cell label="Selection cycling" width="w-[22px]" on>
          <path d="M7 8h10v10H7z" fill="#fff" stroke="none" />
          <path d="M5 16V6h9M3 1v6M0 4h6" stroke="#fff" strokeWidth="1.4" />
        </Cell>
      </Group>
      <Group>
        <Cell label="Annotation visibility" width="w-[23px]" on>
          <Person />
          <circle cx="14.5" cy="4.5" r="2.5" stroke="#fff" />
        </Cell>
        <Cell label="Auto scale" width="w-[24px]">
          <Person />
          <path d="M15 1l-3 4h4l-3 4" />
        </Cell>
        <Cell label="Annotation" width="w-[24px]">
          <Person />
        </Cell>
        <button className="flex w-[36px] items-center justify-center gap-[5px]">
          1:1
          <Caret />
        </button>
      </Group>
      <Group>
        <Cell label="Workspace switching" width="w-[39px]" caret>
          <circle cx="9" cy="9" r="4.5" strokeWidth="3.5" />
          <circle cx="9" cy="9" r="7" strokeWidth="2.5" strokeDasharray="2.8 2.7" />
        </Cell>
      </Group>
      <Group>
        <Cell label="Annotation monitor" width="w-[23px]">
          <path d="M9 1v16M1 9h16" strokeWidth="1.8" />
        </Cell>
      </Group>
      <Group>
        <Cell label="Isolate objects" width="w-[24px]">
          <path d="M2.5 1.5h6v6h-6zM9 11l4 6H5z" />
          <circle cx="14" cy="7.5" r="3" />
        </Cell>
      </Group>
      <Group>
        <Cell label="Graphics performance" width="w-[29px]">
          <path d="M2 0h10l4 4v7H2z" fill="#2e6fb5" stroke="none" />
          <path d="M2 11h8v6H2z" fill="#f3b81f" stroke="none" />
          <path d="M6 2v9M2 6h12" stroke="#fff" />
          <path d="M9 13l3 4 5-6" stroke="#5fd08a" strokeWidth="2" />
        </Cell>
      </Group>
      <Group>
        <Cell label="Clean screen" width="w-[24px]">
          <rect x="1.5" y="2.5" width="15" height="13" strokeWidth="1.3" />
          <path d="M10 8l4-3M14 8V5h-3M8 10l-4 3M4 10v3h3" />
        </Cell>
      </Group>
      <Group>
        <Cell label="Customization" width="w-[24px]">
          <path d="M1 3h16M1 9h16M1 15h16" strokeWidth="1.8" />
        </Cell>
      </Group>
    </div>
  </footer>
);

const App = () => (
  <div className="flex h-screen flex-col overflow-hidden bg-[#222933] font-['Noto_Sans','Open_Sans',sans-serif]">
    <TitleBar />
    <MenuTabs />
    <Ribbon />
    <DocTabs />
    <div className="flex min-h-0 flex-1 bg-[#3b4453]">
      <Palette />
      <SideTabs />
      <Canvas />
    </div>
    <StatusBar />
  </div>
);

export default App;
